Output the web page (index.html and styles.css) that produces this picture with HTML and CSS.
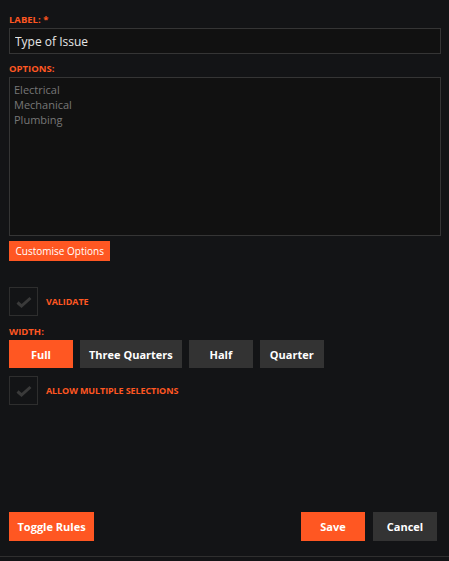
FILE: index.html
```html
<!DOCTYPE html>
<html lang="en">
<head>
  <meta charset="UTF-8" />
  <meta name="viewport" content="width=device-width, initial-scale=1.0"/>
  <title>Edit Field</title>
  <link rel="stylesheet" href="styles.css">
</head>
<body>
  <div class="dialog">
    <div class="dialog-body">
      <label class="field-label" for="label">Label: *</label>
      <input type="text" id="label" class="text-input" value="Type of Issue" />

      <label class="field-label options-label" for="options">Options:</label>
      <textarea id="options" class="text-area">Electrical
Mechanical
Plumbing</textarea>
      <div>
        <button class="btn btn-small">Customise Options</button>
      </div>

      <div class="check-row validate-row">
        <span class="check-box">
          <svg width="16" height="12" viewBox="0 0 16 12"><path d="M1.5 6.5 L5.5 10 L14.5 2" fill="none" stroke="#3a3a3a" stroke-width="3"/></svg>
        </span>
        <span class="check-label">Validate</span>
      </div>

      <div class="field-label width-label">Width:</div>
      <div class="width-group">
        <button class="btn btn-width active">Full</button>
        <button class="btn btn-width">Three Quarters</button>
        <button class="btn btn-width">Half</button>
        <button class="btn btn-width">Quarter</button>
      </div>

      <div class="check-row multi-row">
        <span class="check-box">
          <svg width="16" height="12" viewBox="0 0 16 12"><path d="M1.5 6.5 L5.5 10 L14.5 2" fill="none" stroke="#3a3a3a" stroke-width="3"/></svg>
        </span>
        <span class="check-label">Allow multiple selections</span>
      </div>
    </div>

    <div class="dialog-footer">
      <button class="btn btn-footer btn-orange toggle-btn">Toggle Rules</button>
      <div class="footer-actions">
        <button class="btn btn-footer btn-orange">Save</button>
        <button class="btn btn-footer">Cancel</button>
      </div>
    </div>
  </div>
</body>
</html>
```

FILE: styles.css
```css
* {
  margin: 0;
  padding: 0;
  box-sizing: border-box;
  font-family: 'Open Sans', 'DejaVu Sans', sans-serif;
}

body {
  background: #131416;
}

.dialog {
  display: flex;
  flex-direction: column;
  height: 561px;
}

.dialog-body {
  flex: 1;
  padding: 14px 8px 0 9px;
}

.field-label {
  display: block;
  color: #ff5722;
  font-size: 9.5px;
  font-weight: bold;
  text-transform: uppercase;
  line-height: 12px;
  margin-bottom: 2px;
}

.text-input {
  display: block;
  width: 100%;
  height: 26px;
  background: #111111;
  border: 1px solid #353535;
  color: #e6e6e6;
  font-size: 12px;
  padding: 0 5px;
  outline: none;
}

.options-label {
  margin-top: 9px;
}

.text-area {
  display: block;
  width: 100%;
  height: 159px;
  background: #111111;
  border: 1px solid #353535;
  color: #777777;
  font-size: 11px;
  line-height: 15px;
  padding: 4px 4px;
  resize: none;
  outline: none;
}

.btn {
  border: none;
  background: #333333;
  color: #fff;
  cursor: pointer;
}

.btn-small {
  margin-top: 5px;
  height: 20px;
  padding: 0 6.5px;
  background: #ff5722;
  font-size: 10px;
}

.check-row {
  display: flex;
  align-items: center;
  gap: 8px;
}

.validate-row {
  margin-top: 26px;
}

.multi-row {
  margin-top: 8px;
}

.check-box {
  width: 29px;
  height: 29px;
  border: 1px solid #2e2e2e;
  display: flex;
  align-items: center;
  justify-content: center;
}

.check-label {
  color: #ff5722;
  font-size: 9px;
  font-weight: bold;
  text-transform: uppercase;
  letter-spacing: -0.1px;
}

.width-label {
  margin-top: 10px;
}

.width-group {
  display: flex;
  gap: 7px;
}

.btn-width {
  min-width: 64px;
  height: 28px;
  padding: 0 9px;
  font-size: 11px;
  font-weight: bold;
}

.btn-width.active {
  background: #ff5722;
}

.dialog-footer {
  display: flex;
  justify-content: space-between;
  align-items: center;
  padding: 0 12px 15px 9px;
  border-bottom: 1px solid #2f2f2f;
  margin-bottom: 4px;
}

.footer-actions {
  display: flex;
  gap: 8px;
}

.btn-footer {
  min-width: 64px;
  height: 29px;
  padding: 0 8.5px;
  font-size: 11px;
  font-weight: bold;
}

.btn-orange {
  background: #ff5722;
}
```
